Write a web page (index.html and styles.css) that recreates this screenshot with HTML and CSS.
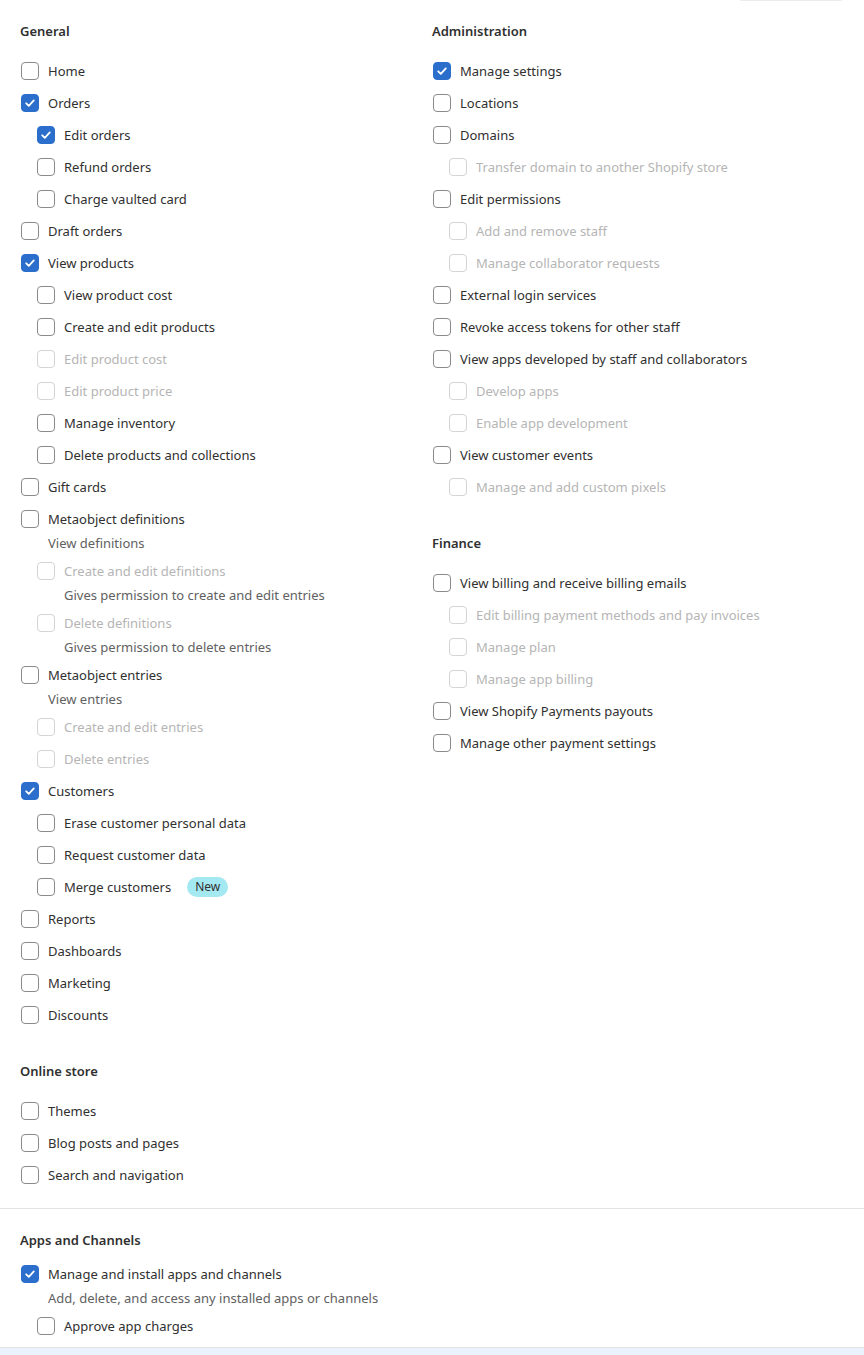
FILE: index.html
```html
<!DOCTYPE html>
<html lang="en">
<head>
<meta charset="utf-8">
<title>Permissions</title>
<link rel="stylesheet" href="styles.css">
</head>
<body>
<div class="stub-row"><div class="stub"></div></div>
<div class="columns">
  <div class="col">
    <section class="section">
      <h2 class="heading">General</h2>
      <ul class="list">
        <li class="item"><div class="choice"><span class="box"></span><span class="label">Home</span></div></li>
        <li class="item"><div class="choice"><span class="box on"><svg viewBox="0 0 18 18"><path d="M5.2 9.3l2.6 2.5 5-5.4"/></svg></span><span class="label">Orders</span></div>
          <ul class="list sub">
            <li class="item"><div class="choice"><span class="box on"><svg viewBox="0 0 18 18"><path d="M5.2 9.3l2.6 2.5 5-5.4"/></svg></span><span class="label">Edit orders</span></div></li>
            <li class="item"><div class="choice"><span class="box"></span><span class="label">Refund orders</span></div></li>
            <li class="item"><div class="choice"><span class="box"></span><span class="label">Charge vaulted card</span></div></li>
          </ul>
        </li>
        <li class="item"><div class="choice"><span class="box"></span><span class="label">Draft orders</span></div></li>
        <li class="item"><div class="choice"><span class="box on"><svg viewBox="0 0 18 18"><path d="M5.2 9.3l2.6 2.5 5-5.4"/></svg></span><span class="label">View products</span></div>
          <ul class="list sub">
            <li class="item"><div class="choice"><span class="box"></span><span class="label">View product cost</span></div></li>
            <li class="item"><div class="choice"><span class="box"></span><span class="label">Create and edit products</span></div></li>
            <li class="item"><div class="choice disabled"><span class="box"></span><span class="label">Edit product cost</span></div></li>
            <li class="item"><div class="choice disabled"><span class="box"></span><span class="label">Edit product price</span></div></li>
            <li class="item"><div class="choice"><span class="box"></span><span class="label">Manage inventory</span></div></li>
            <li class="item"><div class="choice"><span class="box"></span><span class="label">Delete products and collections</span></div></li>
          </ul>
        </li>
        <li class="item"><div class="choice"><span class="box"></span><span class="label">Gift cards</span></div></li>
        <li class="item"><div class="choice"><span class="box"></span><span class="label">Metaobject definitions</span></div>
          <p class="desc">View definitions</p>
          <ul class="list sub">
            <li class="item"><div class="choice disabled"><span class="box"></span><span class="label">Create and edit definitions</span></div>
              <p class="desc">Gives permission to create and edit entries</p></li>
            <li class="item"><div class="choice disabled"><span class="box"></span><span class="label">Delete definitions</span></div>
              <p class="desc">Gives permission to delete entries</p></li>
          </ul>
        </li>
        <li class="item"><div class="choice"><span class="box"></span><span class="label">Metaobject entries</span></div>
          <p class="desc">View entries</p>
          <ul class="list sub">
            <li class="item"><div class="choice disabled"><span class="box"></span><span class="label">Create and edit entries</span></div></li>
            <li class="item"><div class="choice disabled"><span class="box"></span><span class="label">Delete entries</span></div></li>
          </ul>
        </li>
        <li class="item"><div class="choice"><span class="box on"><svg viewBox="0 0 18 18"><path d="M5.2 9.3l2.6 2.5 5-5.4"/></svg></span><span class="label">Customers</span></div>
          <ul class="list sub">
            <li class="item"><div class="choice"><span class="box"></span><span class="label">Erase customer personal data</span></div></li>
            <li class="item"><div class="choice"><span class="box"></span><span class="label">Request customer data</span></div></li>
            <li class="item"><div class="choice"><span class="box"></span><span class="label">Merge customers</span><span class="badge">New</span></div></li>
          </ul>
        </li>
        <li class="item"><div class="choice"><span class="box"></span><span class="label">Reports</span></div></li>
        <li class="item"><div class="choice"><span class="box"></span><span class="label">Dashboards</span></div></li>
        <li class="item"><div class="choice"><span class="box"></span><span class="label">Marketing</span></div></li>
        <li class="item"><div class="choice"><span class="box"></span><span class="label">Discounts</span></div></li>
      </ul>
    </section>
    <section class="section">
      <h2 class="heading">Online store</h2>
      <ul class="list">
        <li class="item"><div class="choice"><span class="box"></span><span class="label">Themes</span></div></li>
        <li class="item"><div class="choice"><span class="box"></span><span class="label">Blog posts and pages</span></div></li>
        <li class="item"><div class="choice"><span class="box"></span><span class="label">Search and navigation</span></div></li>
      </ul>
    </section>
  </div>
  <div class="col">
    <section class="section">
      <h2 class="heading">Administration</h2>
      <ul class="list">
        <li class="item"><div class="choice"><span class="box on"><svg viewBox="0 0 18 18"><path d="M5.2 9.3l2.6 2.5 5-5.4"/></svg></span><span class="label">Manage settings</span></div></li>
        <li class="item"><div class="choice"><span class="box"></span><span class="label">Locations</span></div></li>
        <li class="item"><div class="choice"><span class="box"></span><span class="label">Domains</span></div>
          <ul class="list sub">
            <li class="item"><div class="choice disabled"><span class="box"></span><span class="label">Transfer domain to another Shopify store</span></div></li>
          </ul>
        </li>
        <li class="item"><div class="choice"><span class="box"></span><span class="label">Edit permissions</span></div>
          <ul class="list sub">
            <li class="item"><div class="choice disabled"><span class="box"></span><span class="label">Add and remove staff</span></div></li>
            <li class="item"><div class="choice disabled"><span class="box"></span><span class="label">Manage collaborator requests</span></div></li>
          </ul>
        </li>
        <li class="item"><div class="choice"><span class="box"></span><span class="label">External login services</span></div></li>
        <li class="item"><div class="choice"><span class="box"></span><span class="label">Revoke access tokens for other staff</span></div></li>
        <li class="item"><div class="choice"><span class="box"></span><span class="label">View apps developed by staff and collaborators</span></div>
          <ul class="list sub">
            <li class="item"><div class="choice disabled"><span class="box"></span><span class="label">Develop apps</span></div></li>
            <li class="item"><div class="choice disabled"><span class="box"></span><span class="label">Enable app development</span></div></li>
          </ul>
        </li>
        <li class="item"><div class="choice"><span class="box"></span><span class="label">View customer events</span></div>
          <ul class="list sub">
            <li class="item"><div class="choice disabled"><span class="box"></span><span class="label">Manage and add custom pixels</span></div></li>
          </ul>
        </li>
      </ul>
    </section>
    <section class="section">
      <h2 class="heading">Finance</h2>
      <ul class="list">
        <li class="item"><div class="choice"><span class="box"></span><span class="label">View billing and receive billing emails</span></div>
          <ul class="list sub">
            <li class="item"><div class="choice disabled"><span class="box"></span><span class="label">Edit billing payment methods and pay invoices</span></div></li>
            <li class="item"><div class="choice disabled"><span class="box"></span><span class="label">Manage plan</span></div></li>
            <li class="item"><div class="choice disabled"><span class="box"></span><span class="label">Manage app billing</span></div></li>
          </ul>
        </li>
        <li class="item"><div class="choice"><span class="box"></span><span class="label">View Shopify Payments payouts</span></div></li>
        <li class="item"><div class="choice"><span class="box"></span><span class="label">Manage other payment settings</span></div></li>
      </ul>
    </section>
  </div>
</div>
<div class="apps">
  <h2 class="heading tight">Apps and Channels</h2>
  <ul class="list">
    <li class="item"><div class="choice"><span class="box on"><svg viewBox="0 0 18 18"><path d="M5.2 9.3l2.6 2.5 5-5.4"/></svg></span><span class="label">Manage and install apps and channels</span></div>
      <p class="desc">Add, delete, and access any installed apps or channels</p>
      <ul class="list sub">
        <li class="item"><div class="choice"><span class="box"></span><span class="label">Approve app charges</span></div></li>
      </ul>
    </li>
  </ul>
</div>
<div class="footer"></div>
</body>
</html>
```

FILE: styles.css
```css
* { box-sizing: border-box; }
html, body { margin: 0; padding: 0; background: #fff; }
body {
  font-family: "Noto Sans", "Open Sans", Arial, sans-serif;
  font-size: 13px;
  line-height: 20px;
  color: #303030;
  width: 864px;
}
.stub-row { display: flex; justify-content: flex-end; padding-right: 22px; }
.stub { width: 102px; height: 1px; background: #ebebeb; border-radius: 0 0 3px 3px; }
.columns {
  display: grid;
  grid-template-columns: 1fr 1fr;
  padding: 20px 20px 23px;
  border-bottom: 1px solid #e3e3e3;
}
.col { display: flex; flex-direction: column; gap: 36px; }
.heading {
  margin: 0 0 20px;
  font-size: 13px;
  line-height: 20px;
  font-weight: 600;
  color: #303030;
}
.heading.tight { margin-bottom: 14px; }
.list { list-style: none; margin: 0; padding: 0; display: flex; flex-direction: column; gap: 12px; }
.list.sub { margin-top: 12px; padding-left: 16px; }
.choice { display: flex; align-items: center; height: 20px; }
.box {
  flex: none;
  width: 18px;
  height: 18px;
  margin-left: 1px;
  margin-right: 9px;
  border: 1.5px solid #8a8a8a;
  border-radius: 4px;
  background: #fff;
  display: flex;
  align-items: center;
  justify-content: center;
}
.box.on { background: #2c6ecb; border-color: #2c6ecb; }
.box svg { width: 18px; height: 18px; flex: none; margin: -1.5px; }
.box svg path { fill: none; stroke: #fff; stroke-width: 1.8; stroke-linecap: round; stroke-linejoin: round; }
.disabled .box { border-color: #d4d4d4; }
.disabled .label { color: #b5b5b5; }
.desc { margin: 4px 0 -4px 28px; color: #616161; }
.badge {
  margin-left: 16px;
  height: 20px;
  padding: 0 8px;
  border-radius: 10px;
  background: #a4e8f2;
  color: #303030;
  font-size: 12px;
  line-height: 20px;
}
.apps { padding: 21px 20px 11px; border-bottom: 1px solid #e3e3e3; }
.footer { height: 40px; background: #eaf2fd; }
```
